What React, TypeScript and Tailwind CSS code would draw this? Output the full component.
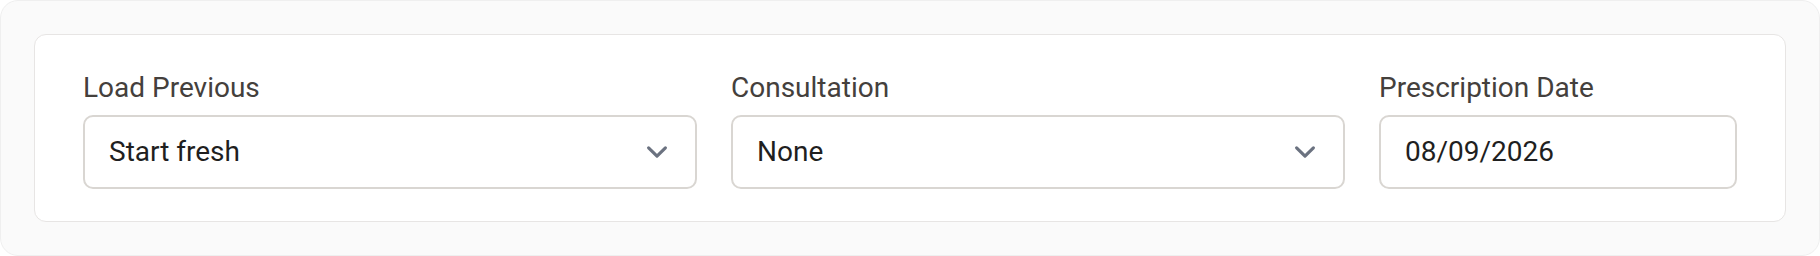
import React from 'react';

function Chevron() {
  return (
    <svg
      className="w-[42px] h-[42px] shrink-0 text-[#6b7280]"
      viewBox="0 0 20 20"
      fill="none"
      stroke="currentColor"
      strokeWidth="1.5"
      strokeLinecap="round"
      strokeLinejoin="round"
    >
      <path d="M6 8l4 4 4-4" />
    </svg>
  );
}

interface FieldProps {
  label: string;
  value: string;
  select?: boolean;
}

function Field({ label, value, select = false }: FieldProps) {
  return (
    <div className="flex flex-col min-w-0">
      <label className="text-[28px] leading-[42px] font-normal text-[#44403c] mb-[6px]">{label}</label>
      <div className="h-[74px] flex items-center justify-between rounded-[10px] border-2 border-[#d9d6d2] bg-white pl-[24px] pr-[17px]">
        <span className="text-[28px] text-[#1f1f1f]">{value}</span>
        {select && <Chevron />}
      </div>
    </div>
  );
}

export default function App() {
  return (
    <div
      className="w-full h-[256px] bg-[#fafafa] border border-[#efefef] rounded-[18px] p-[33px]"
      style={{ fontFamily: 'Roboto, "Liberation Sans", sans-serif' }}
    >
      <div className="h-full bg-white border border-[#e7e5e4] rounded-[12px] px-[48px] py-[32px]">
        <div className="grid grid-cols-[1fr_1fr_358px] gap-x-[34px]">
          <Field label="Load Previous" value="Start fresh" select />
          <Field label="Consultation" value="None" select />
          <Field label="Prescription Date" value="08/09/2026" />
        </div>
      </div>
    </div>
  );
}
